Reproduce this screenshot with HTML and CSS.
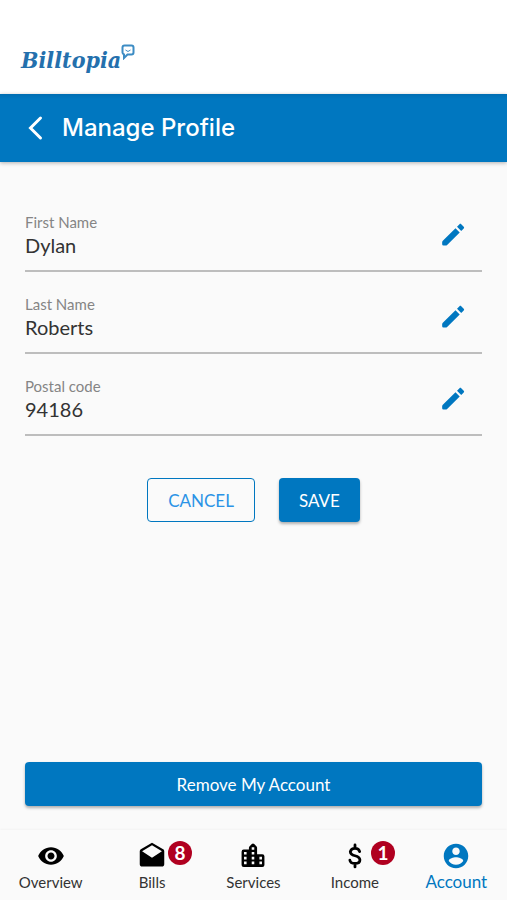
FILE: index.html
```html
<!DOCTYPE html>
<html lang="en">
<head>
<meta charset="utf-8">
<meta name="viewport" content="width=device-width, initial-scale=1">
<title>Billtopia – Manage Profile</title>
<link rel="stylesheet" href="styles.css">
</head>
<body>
<svg class="sprite" aria-hidden="true">
  <symbol id="pencil" viewBox="0 0 24 24">
    <path d="M2 18.800v1.700q0 1.300 1.300 1.300h1.900q.8 0 1.400-.6L18.200 9.600l-3.900-3.900L2.600 17.400q-.6.6-.6 1.400zM19.600 8.200l2.300-2.300c.5-.5.5-1.100 0-1.600l-2.300-2.300c-.5-.5-1.100-.5-1.600 0l-2.300 2.300z"/>
  </symbol>
</svg>
<header class="brand">
  <a class="logo" href="#">
    <span class="logo-name">Billtopia</span>
    <svg class="logo-mark" viewBox="0 0 14 16" aria-hidden="true">
      <path d="M3.500 1.500h7q2 0 2 2v5q0 2-2 2H6.500L3 14V10.400Q1.500 10 1.500 8.500v-5q0-2 2-2z"/>
      <path class="smile" d="M4.500 6q2.500 3 5 0"/>
    </svg>
  </a>
</header>
<div class="titlebar">
  <button class="back" type="button" aria-label="Back">
    <svg viewBox="0 0 16 26" aria-hidden="true"><path d="M13.500 3 3.500 13l10 10"/></svg>
  </button>
  <h1>Manage Profile</h1>
</div>
<main>
  <form class="profile">
    <div class="field">
      <div class="entry">
        <label for="first">First Name</label>
        <input id="first" type="text" value="Dylan">
      </div>
      <button class="edit" type="button" aria-label="Edit first name"><svg aria-hidden="true"><use href="#pencil"/></svg></button>
    </div>
    <div class="field">
      <div class="entry">
        <label for="last">Last Name</label>
        <input id="last" type="text" value="Roberts">
      </div>
      <button class="edit" type="button" aria-label="Edit last name"><svg aria-hidden="true"><use href="#pencil"/></svg></button>
    </div>
    <div class="field">
      <div class="entry">
        <label for="postal">Postal code</label>
        <input id="postal" type="text" value="94186">
      </div>
      <button class="edit" type="button" aria-label="Edit postal code"><svg aria-hidden="true"><use href="#pencil"/></svg></button>
    </div>
    <div class="actions">
      <button class="btn outline" type="button">CANCEL</button>
      <button class="btn solid" type="submit">SAVE</button>
    </div>
  </form>
  <button class="btn solid remove" type="button">Remove My Account</button>
</main>
<nav class="tabs">
  <a href="#">
    <svg viewBox="0 0 24 24" aria-hidden="true"><path d="M12 4.500C7 4.500 2.730 7.610 1 12c1.730 4.390 6 7.500 11 7.500s9.270-3.110 11-7.500c-1.730-4.390-6-7.500-11-7.500zM12 17c-2.760 0-5-2.240-5-5s2.240-5 5-5 5 2.240 5 5-2.240 5-5 5zm0-8c-1.660 0-3 1.340-3 3s1.340 3 3 3 3-1.340 3-3-1.340-3-3-3z"/></svg>
    <span>Overview</span>
  </a>
  <a href="#">
    <svg viewBox="0 0 24 24" aria-hidden="true"><path d="M22.500 8c0-.720-.370-1.350-.940-1.700L12 .7 2.440 6.300C1.870 6.650 1.500 7.280 1.500 8v11c0 1.100.9 2 2 2h17c1.100 0 2-.9 2-2V8zM12 13.400 3.500 8 12 2.800 20.500 8 12 13.400z"/></svg>
    <b class="badge">8</b>
    <span>Bills</span>
  </a>
  <a href="#">
    <svg viewBox="0 0 24 24" aria-hidden="true"><path fill-rule="evenodd" d="M4 6.500h4.500V5q0-.8.600-1.400L11 1.700q1-.9 2 0l1.900 1.900q.6.600.6 1.400v5.500H20q1.800 0 1.800 1.800v7.400q0 1.800-1.800 1.800H4q-1.800 0-1.800-1.800V8.300Q2.200 6.500 4 6.500zM4.300 8.600h2.200v2.200H4.300zM4.300 12.700h2.200v2.200H4.300zM4.300 16.800h2.200V19H4.300zM10.900 4.500h2.200v2.200h-2.200zM10.900 8.600h2.200v2.200h-2.200zM10.900 12.700h2.200v2.200h-2.200zM10.900 16.800h2.200V19h-2.200zM17.500 12.700h2.200v2.200h-2.200zM17.500 16.800h2.200V19h-2.200z"/></svg>
    <span>Services</span>
  </a>
  <a href="#">
    <svg viewBox="0 0 24 24" aria-hidden="true"><path class="dollar" d="M16 8.200Q15.300 5.400 12 5.400T8 8.300Q8 10.800 12 11.800T16.200 15.400Q16.200 18.400 12.100 18.400T7.600 15.500M12 2.500v3M12 18.400v3"/></svg>
    <b class="badge">1</b>
    <span>Income</span>
  </a>
  <a class="current" href="#" aria-current="page">
    <svg viewBox="0 0 24 24" aria-hidden="true"><path d="M12 1.500C6.200 1.500 1.500 6.200 1.500 12S6.200 22.500 12 22.500 22.500 17.800 22.500 12 17.800 1.500 12 1.500zm0 3.300c1.800 0 3.200 1.400 3.200 3.200s-1.400 3.200-3.200 3.200-3.200-1.400-3.200-3.200 1.400-3.200 3.200-3.200zm0 14.700c-2.600 0-4.900-1.300-6.200-3.300.030-2.100 4.100-3.200 6.200-3.200s6.170 1.100 6.200 3.200c-1.300 2-3.600 3.300-6.200 3.300z"/></svg>
    <span>Account</span>
  </a>
</nav>
</body>
</html>
```
FILE: styles.css
```css
:root {
  --blue: #0077c0;
  --page: #fafafa;
}

* {
  box-sizing: border-box;
}

body {
  display: flex;
  flex-direction: column;
  min-height: 100vh;
  margin: 0;
  background: var(--page);
  color: #333;
  font-family: Lato, "Liberation Sans", sans-serif;
}

button,
input {
  margin: 0;
  padding: 0;
  border: 0;
  background: none;
  color: inherit;
  font: inherit;
}

button {
  cursor: pointer;
}

svg {
  display: block;
  fill: currentColor;
}

.sprite {
  display: none;
}

.brand {
  padding: 44px 21px 18px;
  background: #fff;
}

.logo {
  display: inline-flex;
  height: 32px;
  color: #2470ad;
  text-decoration: none;
}

.logo-name {
  font: italic bold 23px/32px "DejaVu Serif Condensed", "DejaVu Serif", serif;
}

.logo-mark {
  width: 14px;
  height: 16px;
  fill: none;
  stroke: #3c8cc4;
  stroke-width: 2;
}

.logo-mark .smile {
  stroke-width: 1;
}

.titlebar {
  display: flex;
  align-items: center;
  gap: 19px;
  height: 68px;
  padding: 0 27px;
  background: linear-gradient(#006db2, var(--blue) 5px);
  box-shadow: 0 1px 4px rgba(0, 0, 0, .3);
  color: #fff;
}

.back svg {
  width: 16px;
  height: 26px;
  fill: none;
  stroke: currentColor;
  stroke-width: 3;
  stroke-linecap: round;
}

h1 {
  margin: 0;
  font: 500 24px/32px Inter, "Liberation Sans", sans-serif;
}

main {
  display: flex;
  flex: 1;
  flex-direction: column;
  justify-content: space-between;
  padding: 28px 25px 24px;
}

.field {
  display: flex;
  align-items: center;
  height: 82px;
  padding-top: 10px;
  border-bottom: 2px solid #bdbdbd;
}

.entry {
  flex: 1;
  min-width: 0;
}

.entry label {
  display: block;
  color: #858585;
  font-size: 15px;
  line-height: 20px;
}

.entry input {
  display: block;
  width: 100%;
  height: 26px;
  font-size: 20px;
}

.edit {
  padding: 8px 16px;
  color: var(--blue);
}

.edit svg {
  width: 26px;
  height: 26px;
}

.actions {
  display: flex;
  justify-content: center;
  gap: 24px;
  margin-top: 42px;
}

.btn {
  height: 44px;
  padding: 0 20px;
  border-radius: 4px;
  font-size: 17px;
}

.outline {
  border: 1px solid var(--blue);
  color: #2b93e6;
}

.solid {
  background: var(--blue);
  box-shadow: 0 2px 3px rgba(0, 0, 0, .3);
  color: #fff;
}

.tabs {
  display: grid;
  grid-template-columns: repeat(5, 1fr);
  height: 70px;
  box-shadow: 0 -1px 2px rgba(0, 0, 0, .03);
}

.tabs a {
  position: relative;
  display: flex;
  flex-direction: column;
  align-items: center;
  padding-top: 12px;
  color: #000;
  font-size: 15px;
  line-height: 24px;
  text-decoration: none;
}

.tabs svg {
  width: 28px;
  height: 28px;
}

.dollar {
  fill: none;
  stroke: currentColor;
  stroke-linecap: round;
  stroke-width: 2.4;
}

.tabs span {
  color: #333;
}

.tabs .current,
.current span {
  color: var(--blue);
  font-size: 17px;
}

.badge {
  position: absolute;
  top: 11px;
  left: calc(50% + 16px);
  width: 24px;
  height: 24px;
  border-radius: 50%;
  background: #b00020;
  color: #fff;
  font-size: 19px;
  text-align: center;
}
```
